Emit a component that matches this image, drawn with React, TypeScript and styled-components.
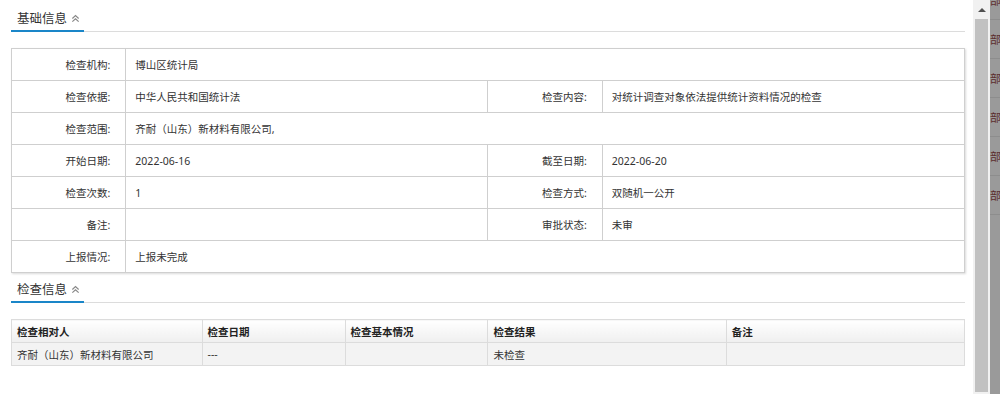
import styled, { createGlobalStyle } from "styled-components";

const GlobalStyle = createGlobalStyle`
  html, body {
    margin: 0;
    padding: 0;
    background: #fff;
  }
  body {
    font-family: "Noto Sans", "Noto Sans CJK SC", sans-serif;
    color: #333;
  }
`;

const Page = styled.div`
  display: flex;
  width: 1000px;
  height: 394px;
  overflow: hidden;
`;

const Main = styled.div`
  flex: 1;
  padding: 0 8px 0 11px;
  font-size: 10.5px;
`;

const SectionHead = styled.div<{ $top: number }>`
  display: flex;
  align-items: flex-end;
  height: ${(p) => p.$top}px;
  border-bottom: 1px solid #dcdcdc;
`;

const SectionTitle = styled.div`
  display: flex;
  align-items: center;
  gap: 4px;
  width: 73px;
  box-sizing: border-box;
  padding: 0 0 3px 6px;
  margin-bottom: -1px;
  border-bottom: 2px solid #1a86c8;
  font-size: 12.5px;
  color: #333;
`;

const Chevron = styled.svg`
  width: 9px;
  height: 9px;
  margin-top: 1px;
`;

const InfoTable = styled.table`
  width: 100%;
  margin-top: 16px;
  border-collapse: collapse;
  table-layout: fixed;
  box-shadow: 1px 1px 2px rgba(0, 0, 0, 0.15);
  td {
    height: 31px;
    border: 1px solid #cfcfcf;
    padding: 0;
    vertical-align: middle;
    white-space: nowrap;
    overflow: hidden;
  }
`;

const Label = styled.td`
  text-align: right;
  padding-right: 15px !important;
`;

const Value = styled.td`
  padding-left: 9px !important;
`;

const ListTable = styled.table`
  width: 100%;
  margin-top: 16px;
  border-collapse: collapse;
  table-layout: fixed;
  th,
  td {
    height: 22px;
    border: 1px solid #dcdcdc;
    padding: 0 5px;
    text-align: left;
    white-space: nowrap;
    overflow: hidden;
  }
  th {
    font-weight: bold;
    color: #222;
    background: linear-gradient(#ffffff, #efefef);
  }
  td {
    background: #f3f3f3;
  }
`;

const Scrollbar = styled.div`
  width: 17px;
  background: #f1f1f1;
  display: flex;
  flex-direction: column;
  align-items: center;
`;

const ArrowUp = styled.div`
  height: 19px;
  display: flex;
  align-items: center;
  justify-content: center;
  width: 100%;
  &::before {
    content: "";
    border-left: 4px solid transparent;
    border-right: 4px solid transparent;
    border-bottom: 4px solid #505050;
  }
`;

const Thumb = styled.div`
  width: 13px;
  height: 373px;
  background: #c1c1c1;
`;

const Strip = styled.div`
  width: 10px;
  background: #9a9a9a;
  display: flex;
  flex-direction: column;
  margin-top: -19px;
  overflow: hidden;
`;

const StripCell = styled.div`
  height: 38px;
  flex: none;
  display: flex;
  align-items: center;
  border-bottom: 1px solid #8d8d8d;
  overflow: hidden;
  font-size: 11px;
  color: #5a2d2d;
  font-family: "Noto Sans CJK SC", sans-serif;
`;

function UpIcon() {
  return (
    <Chevron viewBox="0 0 10 10">
      <path d="M1.5 5 L5 1.8 L8.5 5 M1.5 8.5 L5 5.3 L8.5 8.5" fill="none" stroke="#888" strokeWidth="1.3" />
    </Chevron>
  );
}

function Section({ title, top }: { title: string; top: number }) {
  return (
    <SectionHead $top={top}>
      <SectionTitle>
        {title}
        <UpIcon />
      </SectionTitle>
    </SectionHead>
  );
}

export default function App() {
  return (
    <Page>
      <GlobalStyle />
      <Main>
        <Section title="基础信息" top={31} />
        <InfoTable>
          <colgroup>
            <col style={{ width: "12%" }} />
            <col style={{ width: "38%" }} />
            <col style={{ width: "12%" }} />
            <col style={{ width: "38%" }} />
          </colgroup>
          <tbody>
            <tr>
              <Label>检查机构:</Label>
              <Value colSpan={3}>博山区统计局</Value>
            </tr>
            <tr>
              <Label>检查依据:</Label>
              <Value>中华人民共和国统计法</Value>
              <Label>检查内容:</Label>
              <Value>对统计调查对象依法提供统计资料情况的检查</Value>
            </tr>
            <tr>
              <Label>检查范围:</Label>
              <Value colSpan={3}>齐耐（山东）新材料有限公司,</Value>
            </tr>
            <tr>
              <Label>开始日期:</Label>
              <Value>2022-06-16</Value>
              <Label>截至日期:</Label>
              <Value>2022-06-20</Value>
            </tr>
            <tr>
              <Label>检查次数:</Label>
              <Value>1</Value>
              <Label>检查方式:</Label>
              <Value>双随机一公开</Value>
            </tr>
            <tr>
              <Label>备注:</Label>
              <Value></Value>
              <Label>审批状态:</Label>
              <Value>未审</Value>
            </tr>
            <tr>
              <Label>上报情况:</Label>
              <Value colSpan={3}>上报未完成</Value>
            </tr>
          </tbody>
        </InfoTable>
        <Section title="检查信息" top={29} />
        <ListTable>
          <colgroup>
            <col style={{ width: "20%" }} />
            <col style={{ width: "15%" }} />
            <col style={{ width: "15%" }} />
            <col style={{ width: "25%" }} />
            <col style={{ width: "25%" }} />
          </colgroup>
          <thead>
            <tr>
              <th>检查相对人</th>
              <th>检查日期</th>
              <th>检查基本情况</th>
              <th>检查结果</th>
              <th>备注</th>
            </tr>
          </thead>
          <tbody>
            <tr>
              <td>齐耐（山东）新材料有限公司</td>
              <td>---</td>
              <td></td>
              <td>未检查</td>
              <td></td>
            </tr>
          </tbody>
        </ListTable>
      </Main>
      <Scrollbar>
        <ArrowUp />
        <Thumb />
      </Scrollbar>
      <Strip>
        {Array.from({ length: 6 }).map((_, i) => (
          <StripCell key={i}>部</StripCell>
        ))}
      </Strip>
    </Page>
  );
}
